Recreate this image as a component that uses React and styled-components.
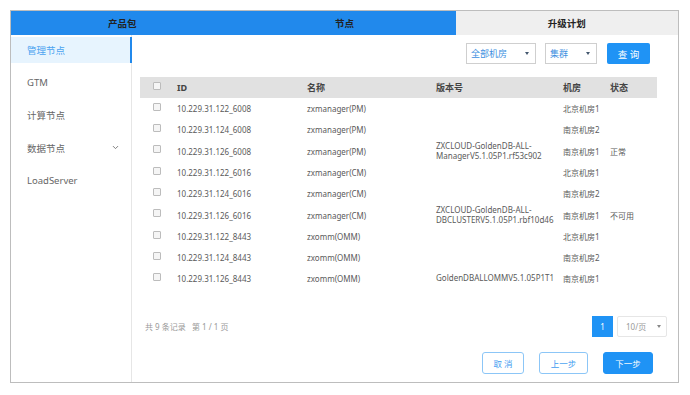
import React from "react";
import styled, { createGlobalStyle } from "styled-components";
import { ChevronDown } from "lucide-react";

const GlobalStyle = createGlobalStyle`
  body {
    margin: 0;
    background: #fff;
    font-family: "Noto Sans", "Noto Sans CJK SC", sans-serif;
  }
`;

const steps = [
  { label: "产品包", done: true },
  { label: "节点", done: true },
  { label: "升级计划", done: false },
];

const menu = [
  { label: "管理节点", active: true },
  { label: "GTM" },
  { label: "计算节点" },
  { label: "数据节点", sub: true },
  { label: "LoadServer" },
];

const rows = [
  ["10.229.31.122_6008", "zxmanager(PM)", null, "北京机房1", ""],
  ["10.229.31.124_6008", "zxmanager(PM)", null, "南京机房2", ""],
  ["10.229.31.126_6008", "zxmanager(PM)", ["ZXCLOUD-GoldenDB-ALL-", "ManagerV5.1.05P1.rf53c902"], "南京机房1", "正常"],
  ["10.229.31.122_6016", "zxmanager(CM)", null, "北京机房1", ""],
  ["10.229.31.124_6016", "zxmanager(CM)", null, "南京机房2", ""],
  ["10.229.31.126_6016", "zxmanager(CM)", ["ZXCLOUD-GoldenDB-ALL-", "DBCLUSTERV5.1.05P1.rbf10d46"], "南京机房1", "不可用"],
  ["10.229.31.122_8443", "zxomm(OMM)", null, "北京机房1", ""],
  ["10.229.31.124_8443", "zxomm(OMM)", null, "南京机房2", ""],
  ["10.229.31.126_8443", "zxomm(OMM)", ["GoldenDBALLOMMV5.1.05P1T1"], "南京机房1", ""],
];

export default function App() {
  return (
    <>
      <GlobalStyle />
      <Frame>
        <Steps>
          {steps.map((s) => (
            <Step key={s.label} $done={s.done}>
              {s.label}
            </Step>
          ))}
        </Steps>
        <Body>
          <Sidebar>
            {menu.map((m) => (
              <MenuItem key={m.label} $active={m.active}>
                {m.label}
                {m.sub && <ChevronDown size={9} strokeWidth={2.5} color="#777" />}
              </MenuItem>
            ))}
          </Sidebar>
          <Main>
            <Filters>
              <Select $w={70}>全部机房</Select>
              <Select $w={52}>集群</Select>
              <QueryButton>查 询</QueryButton>
            </Filters>
            <Table>
              <HeadRow>
                <CheckCell>
                  <Check />
                </CheckCell>
                <Cell>ID</Cell>
                <Cell>名称</Cell>
                <Cell>版本号</Cell>
                <Cell>机房</Cell>
                <Cell>状态</Cell>
              </HeadRow>
              {rows.map(([id, name, ver, room, status]) => (
                <Row key={id} $tall={ver && ver.length > 1}>
                  <CheckCell>
                    <Check />
                  </CheckCell>
                  <Cell>{id}</Cell>
                  <Cell>{name}</Cell>
                  <Cell>
                    {ver && ver.map((line) => <Line key={line}>{line}</Line>)}
                  </Cell>
                  <Cell>{room}</Cell>
                  <Cell>{status}</Cell>
                </Row>
              ))}
            </Table>
            <Pager>
              <PagerInfo>共 9 条记录&nbsp;&nbsp;&nbsp;第 1 / 1 页</PagerInfo>
              <PagerControls>
                <PageNum>1</PageNum>
                <SizeSelect>10/页</SizeSelect>
              </PagerControls>
            </Pager>
            <Actions>
              <Button $w={42}>取 消</Button>
              <Button $w={49}>上一步</Button>
              <Button $w={50} $primary>下一步</Button>
            </Actions>
          </Main>
        </Body>
      </Frame>
    </>
  );
}

const Frame = styled.div`
  margin: 10px 0 0 10px;
  width: 669px;
  height: 373px;
  box-sizing: border-box;
  border: 1px solid #bdbdbd;
  display: flex;
  flex-direction: column;
`;

const Steps = styled.div`
  display: flex;
  height: 24px;
`;

const Step = styled.div`
  flex: 1;
  display: flex;
  align-items: center;
  justify-content: center;
  font-size: 9.5px;
  font-weight: 700;
  color: #222;
  background: ${(p) => (p.$done ? "#2189ec" : "#efefef")};
`;

const Body = styled.div`
  flex: 1;
  display: flex;
  min-height: 0;
`;

const Sidebar = styled.div`
  width: 120px;
  border-right: 1px solid #e6e6e6;
  padding-top: 2px;
  display: flex;
  flex-direction: column;
  gap: 6.5px;
`;

const MenuItem = styled.div`
  height: 26px;
  display: flex;
  align-items: center;
  justify-content: space-between;
  padding: 0 10px 0 16px;
  margin-right: -1px;
  font-size: 9.5px;
  color: ${(p) => (p.$active ? "#4ba3f0" : "#666")};
  background: ${(p) => (p.$active ? "#e7f4fe" : "transparent")};
  border-right: 2px solid ${(p) => (p.$active ? "#2189ec" : "transparent")};
`;

const Main = styled.div`
  flex: 1;
  display: flex;
  flex-direction: column;
  padding: 8px 21px 8px 8px;
`;

const Filters = styled.div`
  display: flex;
  justify-content: flex-end;
  align-items: center;
  gap: 9px;
  padding-right: 7px;
  height: 21px;
`;

const Select = styled.div`
  width: ${(p) => p.$w}px;
  height: 21px;
  box-sizing: border-box;
  border: 1px solid #cfcfcf;
  display: flex;
  align-items: center;
  padding: 0 6px 0 4px;
  font-size: 9px;
  color: #3d8fe0;
  justify-content: space-between;

  &::after {
    content: "";
    border-left: 2px solid transparent;
    border-right: 2px solid transparent;
    border-top: 3px solid #44586f;
  }
`;

const QueryButton = styled.div`
  width: 43px;
  height: 21px;
  margin-left: 1px;
  border-radius: 2px;
  background: #1f93f5;
  color: #fff;
  font-size: 9.5px;
  display: flex;
  align-items: center;
  justify-content: center;
`;

const Table = styled.div`
  margin-top: 13px;
  display: flex;
  flex-direction: column;
`;

const Row = styled.div`
  display: grid;
  grid-template-columns: 34px 130px 129px 127px 47px 1fr;
  align-items: center;
  height: ${(p) => (p.$tall ? 22 : 21)}px;
  font-size: 8px;
  color: #5a5a5a;
`;

const HeadRow = styled(Row)`
  background: #e1e1e1;
  font-size: 9px;
  font-weight: 700;
  color: #444;
`;

const Cell = styled.div`
  padding-left: 3px;
  white-space: nowrap;
  line-height: 11px;
`;

const Line = styled.div`
  line-height: 10.5px;
`;

const CheckCell = styled.div`
  display: flex;
  justify-content: center;
  margin-bottom: 4px;
`;

const Check = styled.span`
  width: 8px;
  height: 8px;
  box-sizing: border-box;
  border: 1px solid #bcbcbc;
  border-radius: 1px;
  background: #f5f5f5;
`;

const Pager = styled.div`
  margin-top: auto;
  margin-right: -10px;
  padding-left: 5px;
  display: flex;
  align-items: center;
  justify-content: space-between;
  height: 21px;
`;

const PagerInfo = styled.div`
  font-size: 8px;
  color: #999;
`;

const PagerControls = styled.div`
  display: flex;
  gap: 4px;
`;

const PageNum = styled.div`
  width: 21px;
  height: 21px;
  background: #1f93f5;
  color: #fff;
  font-size: 8px;
  display: flex;
  align-items: center;
  justify-content: center;
`;

const SizeSelect = styled.div`
  width: 50px;
  height: 21px;
  box-sizing: border-box;
  border: 1px solid #e6e6e6;
  border-radius: 2px;
  display: flex;
  align-items: center;
  justify-content: space-between;
  padding: 0 5px 0 8px;
  font-size: 8px;
  color: #999;

  &::after {
    content: "";
    border-left: 2px solid transparent;
    border-right: 2px solid transparent;
    border-top: 3px solid #888;
  }
`;

const Actions = styled.div`
  margin-top: 15px;
  display: flex;
  justify-content: flex-end;
  gap: 15px;
  padding-right: 4px;
`;

const Button = styled.div`
  width: ${(p) => p.$w}px;
  height: 22px;
  box-sizing: border-box;
  border-radius: 3px;
  border: 1px solid ${(p) => (p.$primary ? "#1f93f5" : "#8cc6f7")};
  background: ${(p) => (p.$primary ? "#1f93f5" : "#fff")};
  color: ${(p) => (p.$primary ? "#fff" : "#3f9cf0")};
  font-size: 8.5px;
  display: flex;
  align-items: center;
  justify-content: center;
`;
